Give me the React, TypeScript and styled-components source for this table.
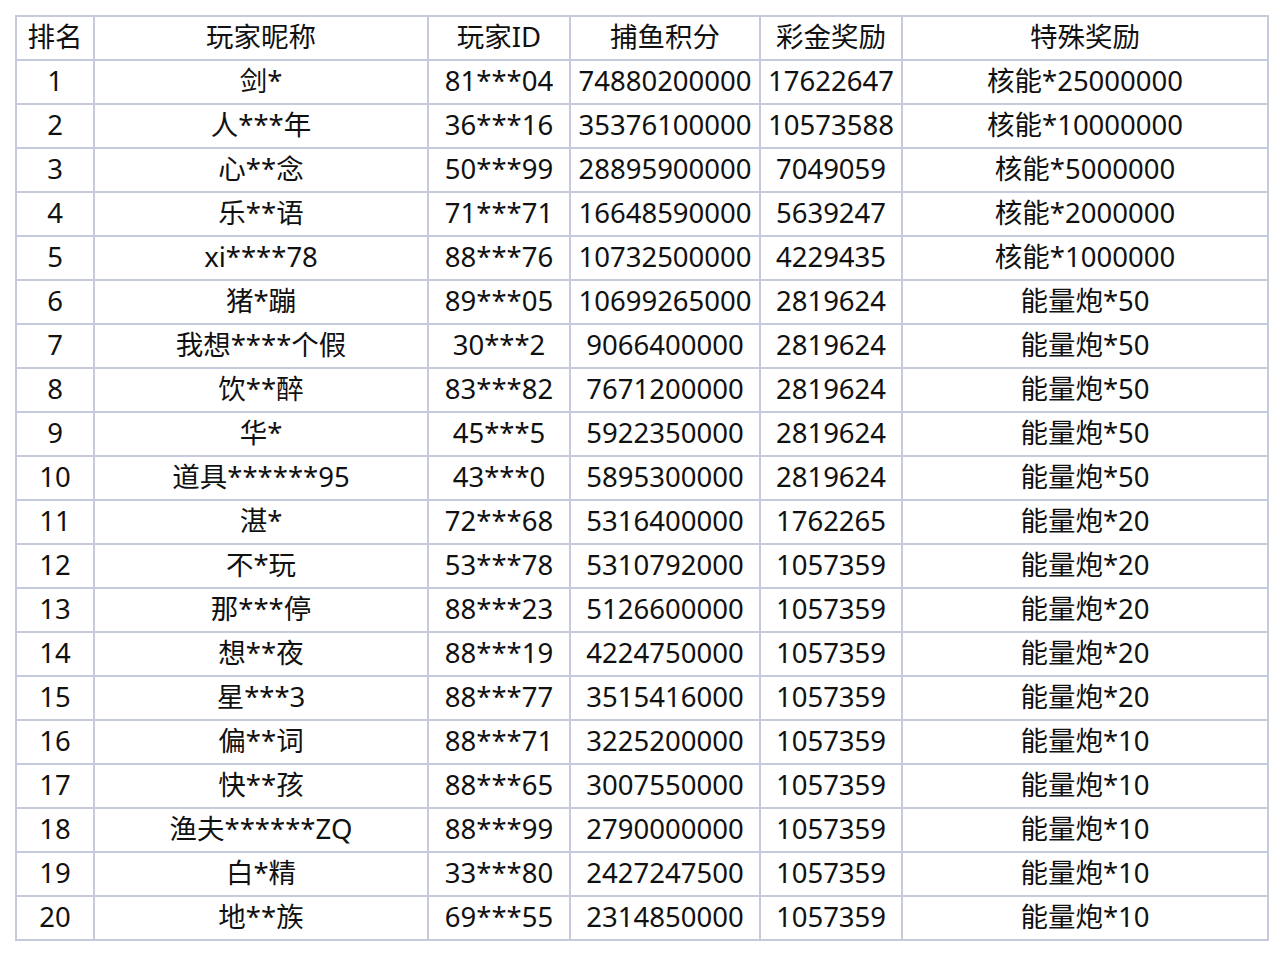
import React from "react";
import styled, { createGlobalStyle } from "styled-components";

const GlobalStyle = createGlobalStyle`
  html, body {
    margin: 0;
    padding: 0;
    background: #ffffff;
  }
  body {
    font-family: "Noto Sans", "Open Sans", "Noto Sans CJK SC", sans-serif;
  }
`;

const Page = styled.div`
  padding: 15px 0 0 15px;
`;

const Table = styled.table`
  width: 1253px;
  border-collapse: collapse;
  table-layout: fixed;
  color: #111111;
  font-size: 27.5px;
`;

const Cell = styled.td`
  border: 2px solid #c5cbdc;
  height: 40px;
  padding: 0 0 2px 0;
  text-align: center;
  vertical-align: middle;
  white-space: nowrap;
  line-height: 40px;
`;

const HeadCell = styled(Cell).attrs({ as: "th" })`
  font-weight: 400;
`;

const columns = [
  { title: "排名", width: 78 },
  { title: "玩家昵称", width: 334 },
  { title: "玩家ID", width: 142 },
  { title: "捕鱼积分", width: 190 },
  { title: "彩金奖励", width: 142 },
  { title: "特殊奖励", width: 366 },
];

const rows: string[][] = [
  ["1", "剑*", "81***04", "74880200000", "17622647", "核能*25000000"],
  ["2", "人***年", "36***16", "35376100000", "10573588", "核能*10000000"],
  ["3", "心**念", "50***99", "28895900000", "7049059", "核能*5000000"],
  ["4", "乐**语", "71***71", "16648590000", "5639247", "核能*2000000"],
  ["5", "xi****78", "88***76", "10732500000", "4229435", "核能*1000000"],
  ["6", "猪*蹦", "89***05", "10699265000", "2819624", "能量炮*50"],
  ["7", "我想****个假", "30***2", "9066400000", "2819624", "能量炮*50"],
  ["8", "饮**醉", "83***82", "7671200000", "2819624", "能量炮*50"],
  ["9", "华*", "45***5", "5922350000", "2819624", "能量炮*50"],
  ["10", "道具******95", "43***0", "5895300000", "2819624", "能量炮*50"],
  ["11", "湛*", "72***68", "5316400000", "1762265", "能量炮*20"],
  ["12", "不*玩", "53***78", "5310792000", "1057359", "能量炮*20"],
  ["13", "那***停", "88***23", "5126600000", "1057359", "能量炮*20"],
  ["14", "想**夜", "88***19", "4224750000", "1057359", "能量炮*20"],
  ["15", "星***3", "88***77", "3515416000", "1057359", "能量炮*20"],
  ["16", "偏**词", "88***71", "3225200000", "1057359", "能量炮*10"],
  ["17", "快**孩", "88***65", "3007550000", "1057359", "能量炮*10"],
  ["18", "渔夫******ZQ", "88***99", "2790000000", "1057359", "能量炮*10"],
  ["19", "白*精", "33***80", "2427247500", "1057359", "能量炮*10"],
  ["20", "地**族", "69***55", "2314850000", "1057359", "能量炮*10"],
];

export default function App() {
  return (
    <Page>
      <GlobalStyle />
      <Table>
        <colgroup>
          {columns.map((c) => (
            <col key={c.title} style={{ width: c.width }} />
          ))}
        </colgroup>
        <thead>
          <tr>
            {columns.map((c) => (
              <HeadCell key={c.title}>{c.title}</HeadCell>
            ))}
          </tr>
        </thead>
        <tbody>
          {rows.map((r) => (
            <tr key={r[0]}>
              {r.map((v, i) => (
                <Cell key={i}>{v}</Cell>
              ))}
            </tr>
          ))}
        </tbody>
      </Table>
    </Page>
  );
}
